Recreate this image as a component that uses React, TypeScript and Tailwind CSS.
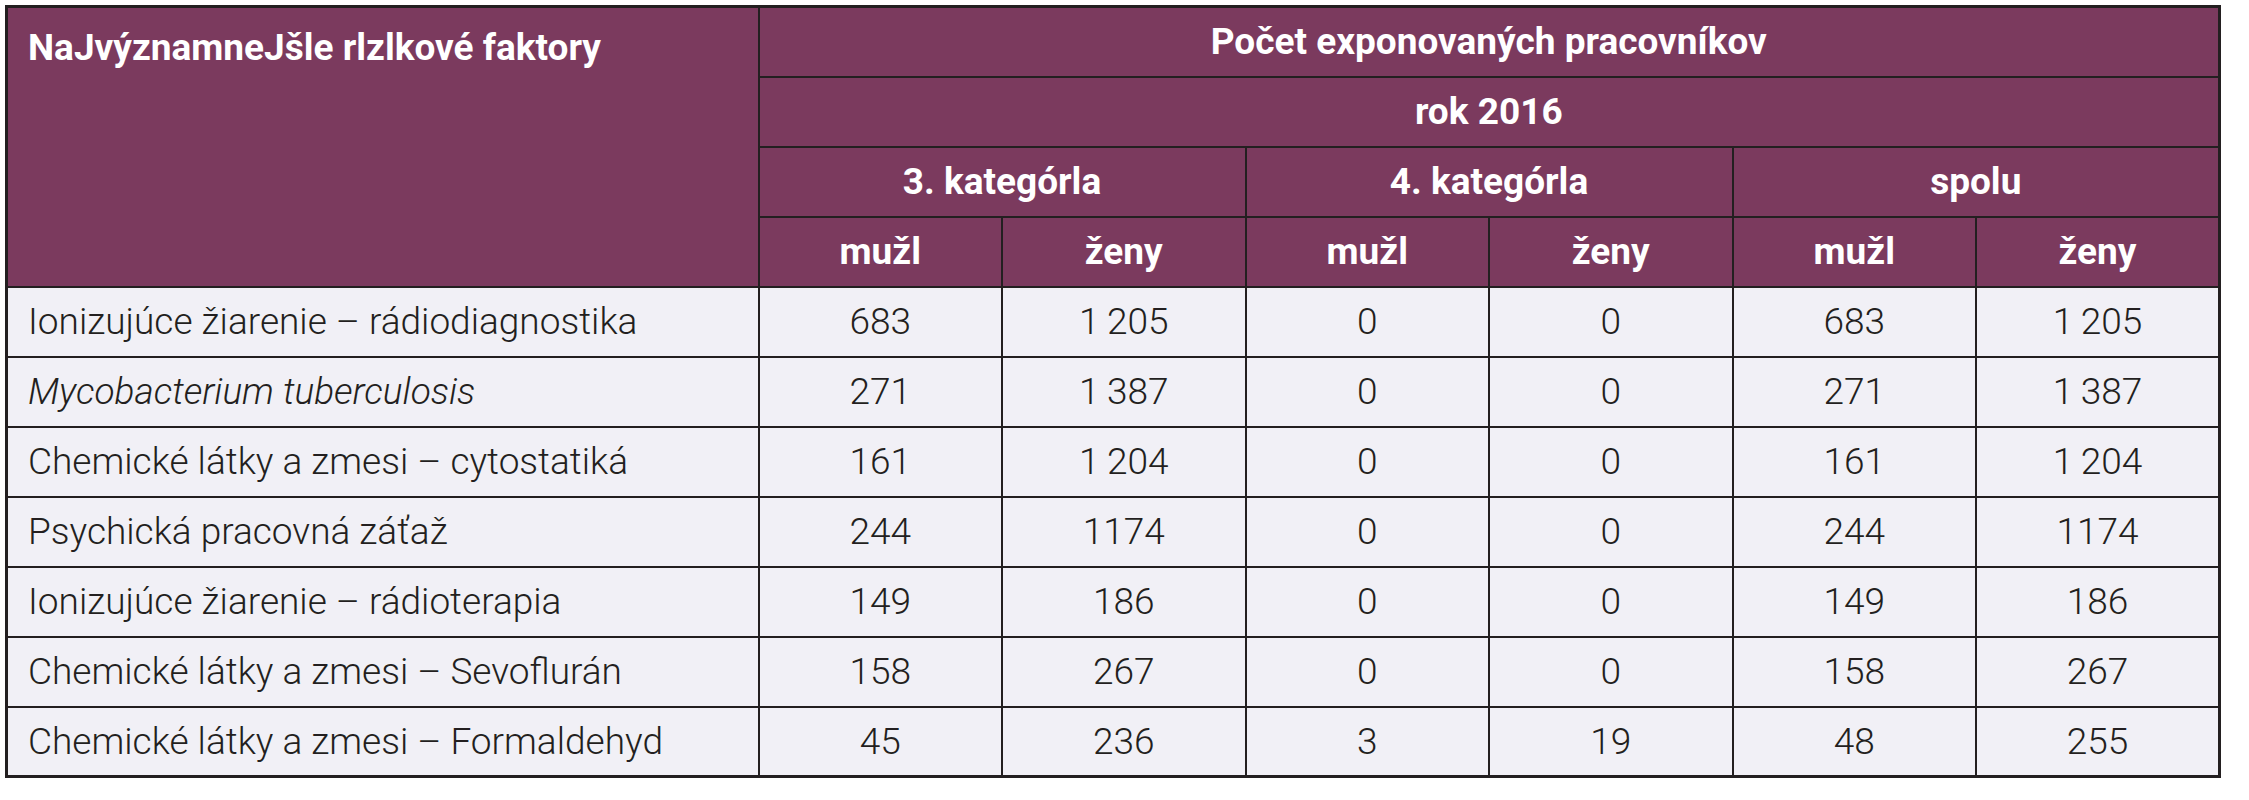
import React from 'react';

interface Row {
  label: string;
  italic?: boolean;
  values: string[];
}

const rows: Row[] = [
  { label: 'Ionizujúce žiarenie – rádiodiagnostika', values: ['683', '1\u2009205', '0', '0', '683', '1\u2009205'] },
  { label: 'Mycobacterium tuberculosis', italic: true, values: ['271', '1\u2009387', '0', '0', '271', '1\u2009387'] },
  { label: 'Chemické látky a zmesi – cytostatiká', values: ['161', '1\u2009204', '0', '0', '161', '1\u2009204'] },
  { label: 'Psychická pracovná záťaž', values: ['244', '1174', '0', '0', '244', '1174'] },
  { label: 'Ionizujúce žiarenie – rádioterapia', values: ['149', '186', '0', '0', '149', '186'] },
  { label: 'Chemické látky a zmesi – Sevoflurán', values: ['158', '267', '0', '0', '158', '267'] },
  { label: 'Chemické látky a zmesi – Formaldehyd', values: ['45', '236', '3', '19', '48', '255'] },
];

const head = 'border-2 border-[#231f20] bg-[#7b3a5e] text-white font-bold text-[37px] text-center h-[70px] align-middle';
const cell = 'border-2 border-[#231f20] h-[70px] align-middle';

const App: React.FC = () => {
  return (
    <div className="bg-white p-[5px] w-[2249px] h-[800px] font-['Roboto',sans-serif]">
      <table className="table-fixed border-collapse border-[3px] border-[#231f20] w-[2216px]">
        <colgroup>
          <col className="w-[752px]" />
          <col />
          <col />
          <col />
          <col />
          <col />
          <col />
        </colgroup>
        <thead>
          <tr>
            <th
              rowSpan={4}
              className="border-2 border-[#231f20] bg-[#7b3a5e] text-white font-bold text-[37px] text-left align-top pl-[20px] pt-[12px]"
            >
              NaJvýznamneJšle rlzlkové faktory
            </th>
            <th colSpan={6} className={head}>Počet exponovaných pracovníkov</th>
          </tr>
          <tr>
            <th colSpan={6} className={head}>rok 2016</th>
          </tr>
          <tr>
            <th colSpan={2} className={head}>3. kategórla</th>
            <th colSpan={2} className={head}>4. kategórla</th>
            <th colSpan={2} className={head}>spolu</th>
          </tr>
          <tr>
            {['mužl', 'ženy', 'mužl', 'ženy', 'mužl', 'ženy'].map((t, i) => (
              <th key={i} className={head}>{t}</th>
            ))}
          </tr>
        </thead>
        <tbody className="bg-[#f1f0f6] text-[#231f20] font-light text-[37px]">
          {rows.map((row, r) => (
            <tr key={r}>
              <td className={`${cell} pl-[20px] ${row.italic ? 'italic' : ''}`}>{row.label}</td>
              {row.values.map((v, i) => (
                <td key={i} className={`${cell} text-center`}>{v}</td>
              ))}
            </tr>
          ))}
        </tbody>
      </table>
    </div>
  );
};

export default App;
